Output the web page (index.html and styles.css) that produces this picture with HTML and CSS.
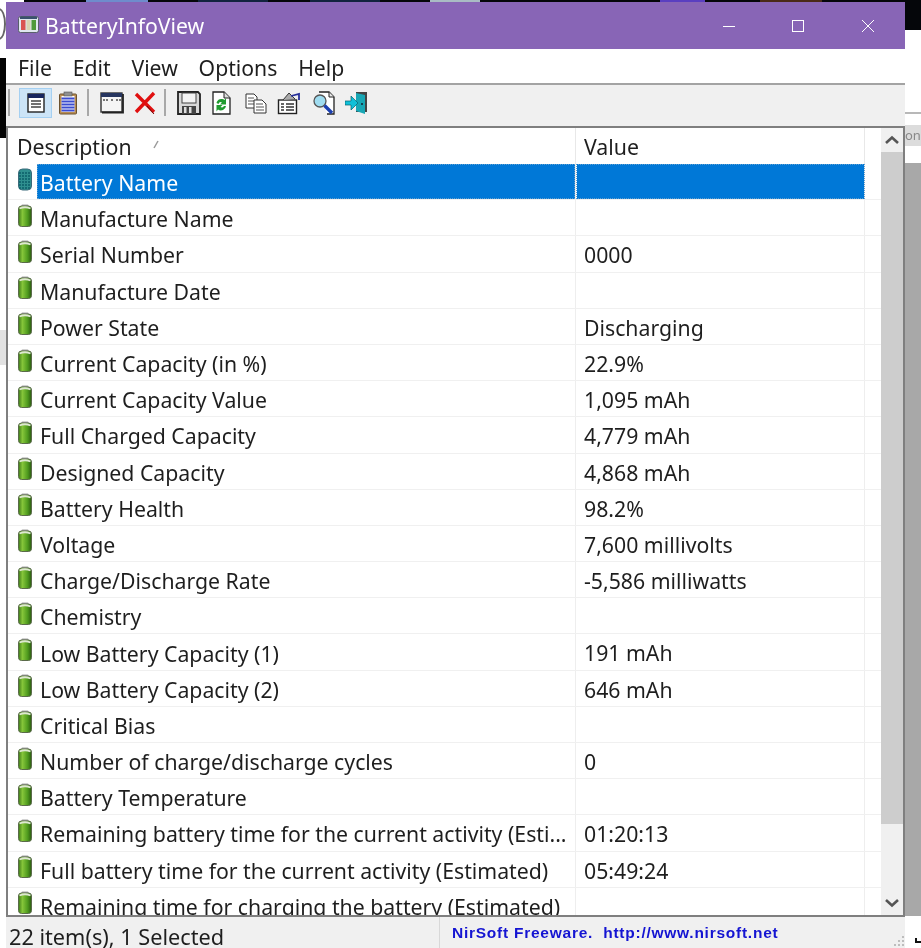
FILE: index.html
```html
<!DOCTYPE html>
<html lang="en">
<head>
<meta charset="utf-8">
<title>BatteryInfoView</title>
<link rel="stylesheet" href="styles.css">
</head>
<body>
<svg class="defs" width="0" height="0" aria-hidden="true">
  <defs>
    <linearGradient id="bg" x1="0" x2="1" y1="0" y2="0">
      <stop offset="0" stop-color="#3d7a18"/><stop offset=".3" stop-color="#86c63a"/><stop offset=".7" stop-color="#4f9a1e"/><stop offset="1" stop-color="#2a5a10"/>
    </linearGradient>
    <symbol id="batt" viewBox="0 0 16 23">
      <rect x="4.500" y="0.500" width="7" height="3" rx="1" fill="#a5a5a5"/>
      <rect x="1.500" y="2" width="13" height="20.500" rx="3" fill="url(#bg)" stroke="#5a6a4a" stroke-width="1"/>
      <path d="M2.500 4.500q5.500-2.500 11 0" fill="none" stroke="#dfe8d2" stroke-width="1.800"/>
    </symbol>
  </defs>
</svg>
<div class="desk">
  <div class="strip-top"></div>
  <i class="blob b1"></i><i class="blob b2"></i><i class="blob b3"></i><i class="blob b4"></i><i class="blob b5"></i><i class="blob b6"></i>
  <div class="left-black"></div>
  <div class="left-ring"></div>
  <div class="left-grey"></div>
  <div class="right-line"></div>
  <div class="right-tab">on</div>
  <div class="right-grey"></div>
  <div class="corner"></div>

  <main class="win">
    <header class="title">
      <svg class="appicon" width="22" height="18" viewBox="0 0 22 18">
        <rect x="0.500" y="0.500" width="20" height="16" rx="2" fill="#dfe6ee" stroke="#59606b"/>
        <rect x="2" y="0.500" width="17" height="2.500" fill="#39506e"/>
        <rect x="3" y="4" width="4.500" height="10" fill="#d9534f"/>
        <rect x="8.500" y="4" width="4" height="10" fill="#d8d4b0"/>
        <rect x="13.500" y="4" width="4.500" height="10" fill="#4f9a3a"/>
      </svg>
      <span class="title-text">BatteryInfoView</span>
      <div class="winbtns">
        <span class="wb"><svg width="12" height="12" viewBox="0 0 12 12"><path d="M0 6.500h12" stroke="#fff"/></svg></span>
        <span class="wb"><svg width="12" height="12" viewBox="0 0 12 12"><rect x=".5" y=".5" width="11" height="11" fill="none" stroke="#fff"/></svg></span>
        <span class="wb"><svg width="12" height="12" viewBox="0 0 12 12"><path d="M0 0l12 12M12 0L0 12" stroke="#fff"/></svg></span>
      </div>
    </header>
    <nav class="menu">
      <span class="mi">File</span><span class="mi">Edit</span><span class="mi">View</span><span class="mi">Options</span><span class="mi">Help</span>
    </nav>
    <div class="toolbar">
      <i class="sep first"></i>
      <span class="tb active"><svg width="24" height="24" viewBox="0 0 24 24"><rect x="4" y="3" width="16" height="18" fill="#fff" stroke="#222" stroke-width="1.400"/><rect x="4" y="3" width="16" height="4" fill="#17255e"/><path d="M7 10h10M7 13h10M7 16h10" stroke="#444" stroke-width="1.500"/></svg></span>
      <span class="tb"><svg width="24" height="24" viewBox="0 0 24 24"><rect x="3.500" y="3" width="17" height="20" rx="1" fill="#b98d52" stroke="#6b5230"/><rect x="5.500" y="5" width="13" height="16" fill="#fff"/><path d="M5.500 7.500h13M5.500 10.500h13M5.500 13.500h13M5.500 16.500h13M5.500 19.500h13" stroke="#3a4bd0" stroke-width="1.800"/><rect x="8" y="1" width="8" height="4" fill="#8f8f8f" stroke="#555" stroke-width=".6"/></svg></span>
      <i class="sep"></i>
      <span class="tb"><svg width="24" height="24" viewBox="0 0 24 24"><rect x="1" y="2" width="21" height="19" fill="#f5f5f5" stroke="#333" stroke-width="1.400"/><rect x="1" y="2" width="21" height="4" fill="#26355f"/><path d="M3 9h6M11 9h3M16 9h5" stroke="#777" stroke-width="2" stroke-dasharray="2 1"/><path d="M2 21.500h21V3" fill="none" stroke="#222" stroke-width="1.800"/></svg></span>
      <span class="tb"><svg width="24" height="24" viewBox="0 0 24 24"><path d="M3 3l18 18M21 2L3 21" stroke="#e01010" stroke-width="3.400"/><path d="M14 15l7 8" stroke="#6b0b0b" stroke-width="1"/></svg></span>
      <i class="sep"></i>
      <span class="tb"><svg width="24" height="24" viewBox="0 0 24 24"><path d="M1 1h20l2 2v20H1z" fill="#d8d8d8" stroke="#222" stroke-width="1.800"/><rect x="5" y="2" width="14" height="10" fill="#f4f4f4" stroke="#444"/><rect x="5" y="15" width="14" height="8" fill="#444"/><rect x="7" y="16" width="2.500" height="6" fill="#ddd"/><rect x="12" y="16" width="2.500" height="6" fill="#ddd"/></svg></span>
      <span class="tb tb-r"><svg width="24" height="24" viewBox="0 0 24 24"><path d="M4 1h11l6 6v16H4z" fill="#fff" stroke="#222" stroke-width="1.300"/><path d="M15 1v6h6" fill="#ddd" stroke="#222"/><path d="M7.500 12a5 5 0 0 1 8-3l1.500-2v6.500h-6l2-2a2.500 2.500 0 0 0-3.500 1.500z" fill="#1f9b2f"/><path d="M17 15a5 5 0 0 1-8 3.500l-1.500 2v-6.500h6l-2 2a2.500 2.500 0 0 0 3.500-1z" fill="#1f9b2f"/></svg></span>
      <span class="tb tb-g"><svg width="24" height="24" viewBox="0 0 24 24"><path d="M2 3h8l3 3v11H2z" fill="#fff" stroke="#333"/><path d="M4 7h6M4 10h6M4 13h6" stroke="#555"/><path d="M10 9h8l4 4v9H10z" fill="#fff" stroke="#333"/><path d="M12 13h7M12 16h8M12 19h8" stroke="#555"/></svg></span>
      <span class="tb"><svg width="24" height="24" viewBox="0 0 24 24"><rect x="1.500" y="9" width="18" height="13.500" fill="#fff" stroke="#222" stroke-width="1.400"/><path d="M4 13h3M9 13h8M4 16h3M9 16h8M4 19h3M9 19h8" stroke="#333" stroke-width="1.400"/><path d="M6 9l6-7 6 6" fill="#aaa" stroke="#333"/><path d="M14 5l8-2v6" fill="none" stroke="#27309a" stroke-width="1.800"/></svg></span>
      <span class="tb tb-g"><svg width="24" height="24" viewBox="0 0 24 24"><path d="M7 1h10l5 5v17h-7" fill="#fff" stroke="#222" stroke-width="1.300"/><path d="M17 1v5h5" fill="#e8e8e8" stroke="#222"/><circle cx="8" cy="10" r="6" fill="#9fdcf0" stroke="#555" stroke-width="1.300"/><path d="M12.500 14.500l7.500 7.500" stroke="#1b3fb0" stroke-width="3.400"/></svg></span>
      <span class="tb tb-d"><svg width="24" height="24" viewBox="0 0 24 24"><path d="M11 1h11v20h-11z" fill="#444"/><path d="M11 2l9 2v19l-9-3z" fill="#18a7b5"/><circle cx="17" cy="13" r="1" fill="#123"/><path d="M0 10h6V5l7 7-7 7v-5H0z" fill="#10c0d8" stroke="#06606e" stroke-width=".7"/></svg></span>
    </div>

    <section class="list">
      <div class="table">
        <div class="head">
          <div class="hc hc-d">Description<svg class="sort" width="8" height="10" viewBox="0 0 8 10"><path d="M6 1L2 8" stroke="#999" stroke-width="1.500"/></svg></div>
          <div class="hc hc-v">Value</div>
        </div>
        <div class="row sel"><div class="cd"><svg class="bi" width="16" height="23" viewBox="0 0 16 23"><rect x="1.500" y="1" width="13" height="21" rx="4" fill="#2f8f8f" stroke="#3b6a7a"/><path d="M2 5h12M2 8h12M2 11h12M2 14h12M2 17h12M2 20h12" stroke="#0c5f6a" stroke-dasharray="2 1" stroke-width="1.400"/></svg><span class="lbl">Battery Name</span></div><div class="cv"></div></div>
        <div class="row"><div class="cd"><svg class="bi" width="16" height="23"><use href="#batt"/></svg><span class="lbl">Manufacture Name</span></div><div class="cv"></div></div>
        <div class="row"><div class="cd"><svg class="bi" width="16" height="23"><use href="#batt"/></svg><span class="lbl">Serial Number</span></div><div class="cv">0000</div></div>
        <div class="row"><div class="cd"><svg class="bi" width="16" height="23"><use href="#batt"/></svg><span class="lbl">Manufacture Date</span></div><div class="cv"></div></div>
        <div class="row"><div class="cd"><svg class="bi" width="16" height="23"><use href="#batt"/></svg><span class="lbl">Power State</span></div><div class="cv">Discharging</div></div>
        <div class="row"><div class="cd"><svg class="bi" width="16" height="23"><use href="#batt"/></svg><span class="lbl">Current Capacity (in %)</span></div><div class="cv">22.9%</div></div>
        <div class="row"><div class="cd"><svg class="bi" width="16" height="23"><use href="#batt"/></svg><span class="lbl">Current Capacity Value</span></div><div class="cv">1,095 mAh</div></div>
        <div class="row"><div class="cd"><svg class="bi" width="16" height="23"><use href="#batt"/></svg><span class="lbl">Full Charged Capacity</span></div><div class="cv">4,779 mAh</div></div>
        <div class="row"><div class="cd"><svg class="bi" width="16" height="23"><use href="#batt"/></svg><span class="lbl">Designed Capacity</span></div><div class="cv">4,868 mAh</div></div>
        <div class="row"><div class="cd"><svg class="bi" width="16" height="23"><use href="#batt"/></svg><span class="lbl">Battery Health</span></div><div class="cv">98.2%</div></div>
        <div class="row"><div class="cd"><svg class="bi" width="16" height="23"><use href="#batt"/></svg><span class="lbl">Voltage</span></div><div class="cv">7,600 millivolts</div></div>
        <div class="row"><div class="cd"><svg class="bi" width="16" height="23"><use href="#batt"/></svg><span class="lbl">Charge/Discharge Rate</span></div><div class="cv">-5,586 milliwatts</div></div>
        <div class="row"><div class="cd"><svg class="bi" width="16" height="23"><use href="#batt"/></svg><span class="lbl">Chemistry</span></div><div class="cv"></div></div>
        <div class="row"><div class="cd"><svg class="bi" width="16" height="23"><use href="#batt"/></svg><span class="lbl">Low Battery Capacity (1)</span></div><div class="cv">191 mAh</div></div>
        <div class="row"><div class="cd"><svg class="bi" width="16" height="23"><use href="#batt"/></svg><span class="lbl">Low Battery Capacity (2)</span></div><div class="cv">646 mAh</div></div>
        <div class="row"><div class="cd"><svg class="bi" width="16" height="23"><use href="#batt"/></svg><span class="lbl">Critical Bias</span></div><div class="cv"></div></div>
        <div class="row"><div class="cd"><svg class="bi" width="16" height="23"><use href="#batt"/></svg><span class="lbl">Number of charge/discharge cycles</span></div><div class="cv">0</div></div>
        <div class="row"><div class="cd"><svg class="bi" width="16" height="23"><use href="#batt"/></svg><span class="lbl">Battery Temperature</span></div><div class="cv"></div></div>
        <div class="row"><div class="cd"><svg class="bi" width="16" height="23"><use href="#batt"/></svg><span class="lbl">Remaining battery time for the current activity (Esti...</span></div><div class="cv">01:20:13</div></div>
        <div class="row"><div class="cd"><svg class="bi" width="16" height="23"><use href="#batt"/></svg><span class="lbl">Full battery time for the current activity (Estimated)</span></div><div class="cv">05:49:24</div></div>
        <div class="row"><div class="cd"><svg class="bi" width="16" height="23"><use href="#batt"/></svg><span class="lbl">Remaining time for charging the battery (Estimated)</span></div><div class="cv"></div></div>
      </div>
      <div class="scroll">
        <span class="arrow"><svg width="16" height="10" viewBox="0 0 16 10"><path d="M2 8l6-5.500 6 5.500" fill="none" stroke="#555" stroke-width="2.600"/></svg></span>
        <div class="track"><div class="thumb"></div></div>
        <span class="arrow"><svg width="16" height="10" viewBox="0 0 16 10"><path d="M2 2l6 5.500 6-5.500" fill="none" stroke="#555" stroke-width="2.600"/></svg></span>
      </div>
    </section>

    <footer class="status">
      <div class="st-left">22 item(s), 1 Selected</div>
      <div class="st-right">NirSoft Freeware.&nbsp; http://www.nirsoft.net</div>
      <svg class="grip" width="14" height="14" viewBox="0 0 14 14"><path d="M10 2h2v2h-2zM6 6h2v2H6zM10 6h2v2h-2zM2 10h2v2H2zM6 10h2v2H6zM10 10h2v2h-2z" fill="#bdbdbd"/></svg>
    </footer>
  </main>
</div>
</body>
</html>
```
FILE: styles.css
```css
* { box-sizing: border-box; }
html, body { margin: 0; height: 100%; }
body { background: #fff; overflow: hidden; font-family: "Noto Sans", "Open Sans", sans-serif; color: #1e1e1e; }
.defs { position: absolute; }
.desk { position: relative; width: 921px; height: 948px; overflow: hidden; filter: blur(.35px); }

.strip-top { position: absolute; left: 24px; right: 0; top: 0; height: 30px; background: #05060a; }
.blob { position: absolute; top: 0; height: 3px; }
.b1 { left: 86px; width: 62px; background: #6f8ccc; }
.b2 { left: 198px; width: 70px; background: #12233f; }
.b3 { left: 310px; width: 70px; background: #12233f; }
.b4 { left: 430px; width: 50px; background: #a9bcc4; }
.b5 { left: 660px; width: 45px; background: #5a3fc0; }
.b6 { left: 760px; width: 62px; background: #4a2a18; }
.left-black { position: absolute; left: 0; top: 58px; width: 6px; height: 80px; background: #040404; }
.left-ring { position: absolute; left: -8px; top: 8px; width: 14px; height: 32px; border: 2px solid #666; border-radius: 50%; }
.left-grey { position: absolute; left: 0; top: 330px; width: 6px; height: 35px; background: #e2e2e2; }
.right-line { position: absolute; left: 905px; right: 0; top: 112px; height: 2px; background: #b8b8b8; }
.right-tab { position: absolute; left: 905px; right: 0; top: 125px; height: 21px; background: #dcdcdc; color: #888; font-size: 13px; line-height: 20px; }
.right-grey { position: absolute; left: 905px; right: 0; top: 163px; height: 753px; background: #a8a8a8; }
.corner { position: absolute; left: 915px; top: 938px; width: 6px; height: 5px; border-left: 2px solid #111; border-bottom: 2px solid #111; }

.win { position: absolute; left: 6px; top: 2px; width: 899px; height: 946px; display: flex; flex-direction: column; background: #f0f0f0; }

.title { height: 47px; background: #8865b6; color: #fff; display: flex; align-items: center; padding-left: 12px; flex: none; }
.appicon { margin-right: 5px; margin-top: -2px; }
.title-text { font-size: 21.2px; }
.winbtns { margin-left: auto; display: flex; }
.wb { width: 71px; height: 47px; display: flex; align-items: center; justify-content: center; }
.wb:nth-child(2) { padding-right: 4px; }
.wb:last-child { width: 70px; padding-right: 4px; }

.menu { height: 34px; background: #fff; display: flex; align-items: center; flex: none; padding: 2px 0 0 12px; font-size: 21.2px; gap: 20.8px; }
.toolbar { height: 43px; flex: none; border-top: 2px solid #a3a3a3; background: #f0f0f0; display: flex; align-items: center; padding: 0 0 6px 2px; }
.sep { width: 2px; height: 27px; background: #a8a8a8; flex: none; margin-left: 3px; margin-right: 6px; }
.sep.first { margin-left: 0; margin-right: 9px; }
.tb { width: 33px; height: 30px; display: flex; align-items: center; justify-content: center; flex: none; }
.tb-r { margin-left: -1px; }
.tb-g { margin-left: 2px; }
.tb-d { margin-left: 0; }
.tb.active { background: #cce4f7; border: 1px solid #a5d0f2; margin-right: -1px; }

.list { flex: 1; min-height: 0; display: flex; border: 2px solid #7f7f7f; background: #fff; overflow: hidden; }
.table { width: 873px; flex: none; overflow: hidden; }
.head { height: 36px; display: flex; }
.hc { font-size: 21.3px; line-height: 37px; border-right: 1px solid #e8e8e8; }
.hc-d { width: 568px; padding-left: 9px; position: relative; }
.hc-v { width: 289px; padding-left: 8px; }
.sort { position: absolute; left: 144px; top: 12px; }
.row { height: 36.2px; display: flex; border-bottom: 1px solid #f0f0f0; }
.cd { width: 568px; display: flex; align-items: center; padding-left: 9px; border-right: 1px solid #eeeeee; font-size: 21.25px; white-space: nowrap; }
.cv { width: 289px; padding-left: 8px; border-right: 1px solid #eeeeee; font-size: 21.25px; line-height: 38px; white-space: nowrap; }
.bi { flex: none; margin-right: 4px; margin-top: -5px; }
.lbl { display: block; padding-left: 3px; line-height: 37.5px; height: 35px; }
.row.sel .lbl { background: #0078d7; color: #fff; flex: 1; outline: 1px dotted #5f9fd0; outline-offset: -1px; }
.row.sel .cv { background: #0078d7; outline: 1px dotted #5f9fd0; outline-offset: -1px; height: 35px; border-left: 1px solid #fff; }

.scroll { width: 22px; flex: none; background: #f0f0f0; display: flex; flex-direction: column; }
.arrow { height: 24px; flex: none; display: flex; align-items: center; justify-content: center; }
.track { flex: 1; min-height: 0; }
.thumb { height: 672px; background: #cdcdcd; }

.status { height: 31px; flex: none; display: flex; position: relative; background: #f0f0f0; }
.st-left { width: 434px; padding-left: 3px; font-size: 21.7px; line-height: 40px; border-right: 1px solid #d8d8d8; white-space: nowrap; overflow: hidden; }
.st-right { padding-left: 12px; font-family: "Liberation Sans", Arial, sans-serif; font-weight: bold; font-size: 15.5px; letter-spacing: .75px; line-height: 32px; color: #1414d2; white-space: nowrap; }
.grip { position: absolute; right: -1px; bottom: 0; }
```
